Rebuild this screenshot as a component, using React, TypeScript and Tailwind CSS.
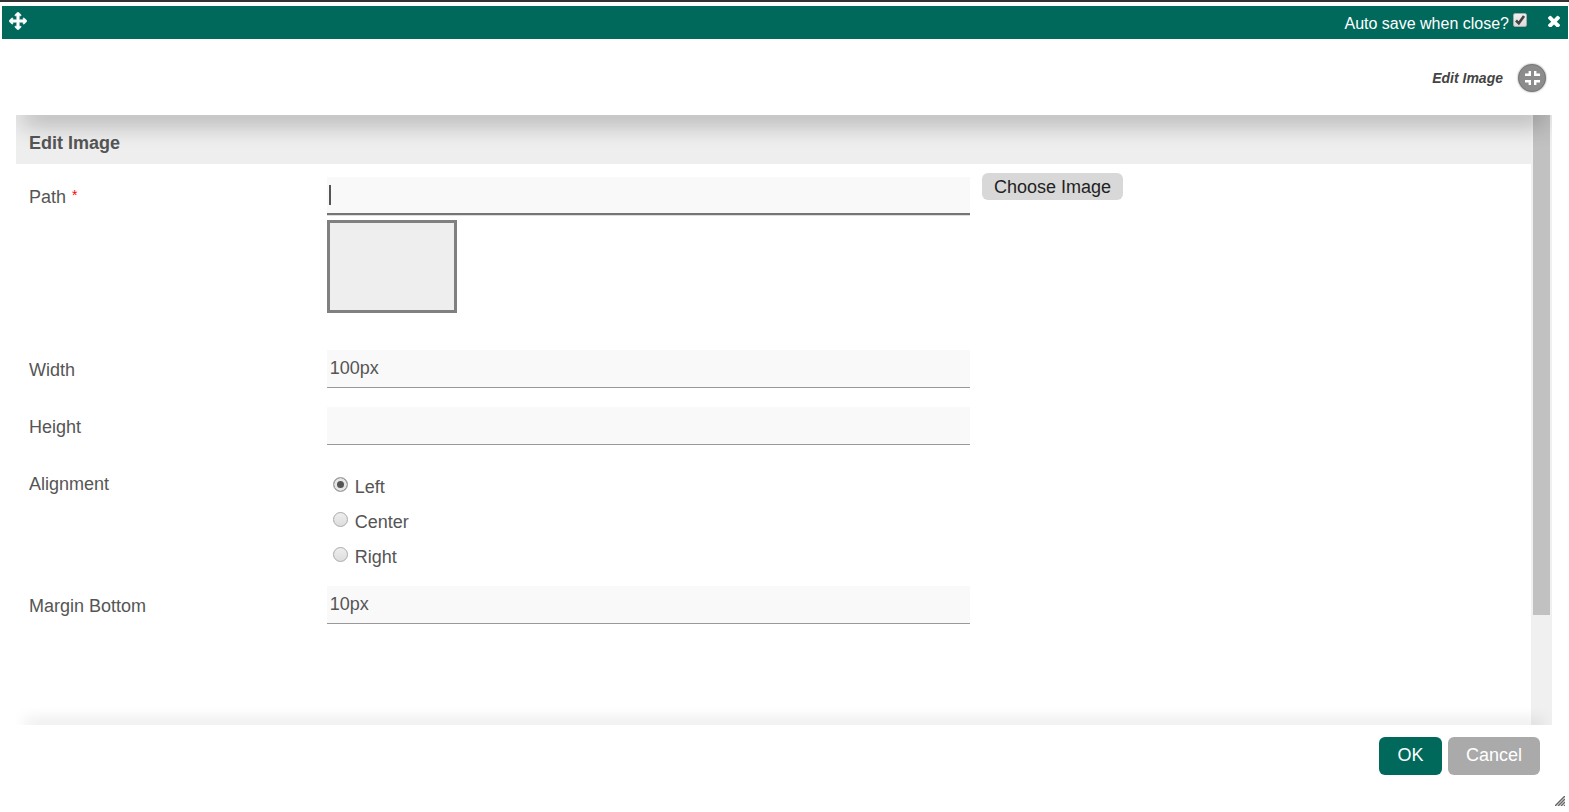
import React, { useState } from 'react';

const ALIGNMENTS = ['Left', 'Center', 'Right'];

const inputClass =
  'block w-full h-[38px] px-[3px] pb-px bg-[#f9f9f9] border-b border-[#999] rounded-none outline-none text-[#555]';

function ArrowsIcon() {
  return (
    <svg viewBox="0 0 1792 1792" className="w-[18px] h-[18px]" fill="currentColor" stroke="currentColor" strokeWidth="50" aria-hidden="true">
      <path d="M1792 896q0 26-19 45l-256 256q-19 19-45 19t-45-19-19-45v-128h-384v384h128q26 0 45 19t19 45-19 45l-256 256q-19 19-45 19t-45-19l-256-256q-19-19-19-45t19-45 45-19h128v-384h-384v128q0 26-19 45t-45 19-45-19l-256-256q-19-19-19-45t19-45l256-256q19-19 45-19t45 19 19 45v128h384v-384h-128q-26 0-45-19t-19-45 19-45l256-256q19-19 45-19t45 19l256 256q19 19 19 45t-19 45-45 19h-128v384h384v-128q0-26 19-45t45-19 45 19l256 256q19 19 19 45z" />
    </svg>
  );
}

function CloseIcon() {
  return (
    <svg viewBox="302 302 1188 1188" className="w-3 h-3" fill="currentColor" aria-hidden="true">
      <path d="M1490 1322q0 40-28 68l-136 136q-28 28-68 28t-68-28l-294-294-294 294q-28 28-68 28t-68-28l-136-136q-28-28-28-68t28-68l294-294-294-294q-28-28-28-68t28-68l136-136q28-28 68-28t68 28l294 294 294-294q28-28 68-28t68 28l136 136q28 28 28 68t-28 68l-294 294 294 294q28 28 28 68z" />
    </svg>
  );
}

function CompressIcon() {
  return (
    <svg viewBox="0 0 15 14" className="w-[15px] h-3.5" fill="none" stroke="currentColor" strokeWidth="2.4" aria-hidden="true">
      <path d="M0 3.8h4.8V0M15 3.8h-4.8V0M0 10.2h4.8V14M15 10.2h-4.8V14" />
    </svg>
  );
}

function Row({ label, htmlFor, required, children }: {
  label: string;
  htmlFor?: string;
  required?: boolean;
  children: React.ReactNode;
}) {
  return (
    <div className="flex items-start pt-2.5 pb-[9px]">
      <label htmlFor={htmlFor} className="w-1/5 pt-2 leading-6">
        {label}
        {required && <span className="ml-1.5 align-top text-sm leading-5 text-[#f00]">*</span>}
      </label>
      {children}
    </div>
  );
}

export default function App() {
  const [path, setPath] = useState('');
  const [width, setWidth] = useState('100px');
  const [height, setHeight] = useState('');
  const [marginBottom, setMarginBottom] = useState('10px');
  const [alignment, setAlignment] = useState('Left');
  const [autoSave, setAutoSave] = useState(true);

  return (
    <div className="flex flex-col min-h-screen bg-white border-t-2 border-[#333] font-['Liberation_Sans',Arial,sans-serif] text-lg text-[#555]">
      {/* Title bar */}
      <div className="flex items-center justify-between h-[33px] mt-1 ml-0.5 mr-px pl-[7px] pr-2 bg-[#00695c] text-white">
        <button type="button" aria-label="Move" className="pb-1">
          <ArrowsIcon />
        </button>
        <div className="flex items-center">
          <label htmlFor="auto-save" className="pt-0.5 text-base">Auto save when close?</label>
          <span className="relative ml-1 mb-1.5 flex">
            <input
              id="auto-save"
              type="checkbox"
              checked={autoSave}
              onChange={(e) => setAutoSave(e.target.checked)}
              className="appearance-none w-3.5 h-3.5 rounded-xs border border-[#aaa] bg-linear-to-b from-[#eee] to-[#ddd]"
            />
            {autoSave && (
              <svg viewBox="0 0 14 14" className="absolute inset-0 w-3.5 h-3.5 pointer-events-none" fill="none" stroke="#444" strokeWidth="2.6" aria-hidden="true">
                <path d="M3 7.5l2.8 2.8L11 3" />
              </svg>
            )}
          </span>
          <button type="button" aria-label="Close" className="ml-[21px] pb-1">
            <CloseIcon />
          </button>
        </div>
      </div>

      {/* Dialog header */}
      <div className="flex items-center justify-end h-[76px] pt-0.5 pr-[23px]">
        <span className="text-sm font-bold italic text-[#444]">Edit Image</span>
        <button
          type="button"
          aria-label="Exit full screen"
          className="flex items-center justify-center ml-[15px] w-7 h-7 rounded-full bg-[#8c8c8c] border border-[#777] text-white shadow-[0_0_2px_#888]"
        >
          <CompressIcon />
        </button>
      </div>

      {/* Scrollable form */}
      <div className="relative flex grow ml-4 mr-[17px] overflow-hidden">
        <div className="grow">
          <h2 className="h-[49px] px-[13px] pt-3.5 mb-[3px] leading-7 font-bold bg-[#eee]">Edit Image</h2>
          <form className="px-[13px]">
            <Row label="Path" htmlFor="path" required>
              <div className="w-[44%] pr-3 pb-[18px]">
                <div className="relative">
                  <input
                    id="path"
                    type="text"
                    value={path}
                    onChange={(e) => setPath(e.target.value)}
                    className="block w-full h-[38px] px-[3px] bg-[#f9f9f9] border-b-2 border-[#757575] rounded-none outline-none caret-transparent shadow-[0_1px_0_#ddd]"
                  />
                  <span className="absolute left-0.5 top-2 w-0.5 h-5 bg-[#555]" />
                </div>
                <div className="mt-[5px] w-[130px] h-[93px] border-3 border-[#808080] bg-[#eee]" />
              </div>
              <button type="button" className="-mt-1 h-[27px] px-3 rounded-md bg-[#d8d8d8] leading-7 text-[#222]">
                Choose Image
              </button>
            </Row>

            <Row label="Width" htmlFor="width">
              <div className="w-[44%] pr-3">
                <input id="width" type="text" value={width} onChange={(e) => setWidth(e.target.value)} className={inputClass} />
              </div>
            </Row>

            <Row label="Height" htmlFor="height">
              <div className="w-[44%] pr-3">
                <input id="height" type="text" value={height} onChange={(e) => setHeight(e.target.value)} className={inputClass} />
              </div>
            </Row>

            <Row label="Alignment">
              <div role="radiogroup" aria-label="Alignment" className="w-[44%] pl-1.5 pt-[5px] -mb-[7px]">
                {ALIGNMENTS.map((name) => (
                  <label key={name} className="flex items-center h-[35px]">
                    <input
                      type="radio"
                      name="alignment"
                      value={name}
                      checked={alignment === name}
                      onChange={() => setAlignment(name)}
                      className="appearance-none w-[15px] h-[15px] mb-1 mr-[7px] rounded-full border border-[#aaa] bg-linear-to-b from-[#eee] to-[#ddd] checked:bg-none checked:bg-[#555] checked:shadow-[inset_0_0_0_3px_#e6e6e6]"
                    />
                    {name}
                  </label>
                ))}
              </div>
            </Row>

            <Row label="Margin Bottom" htmlFor="margin-bottom">
              <div className="w-[44%] pr-3">
                <input id="margin-bottom" type="text" value={marginBottom} onChange={(e) => setMarginBottom(e.target.value)} className={inputClass} />
              </div>
            </Row>
          </form>
        </div>

        {/* Scrollbar */}
        <div className="w-[21px] px-0.5 bg-[#f0f0f0]">
          <div className="h-[82%] bg-[#c1c1c1]" />
        </div>

        {/* Shadows cast by the header and footer */}
        <div className="absolute left-3 right-3 top-0 h-0 shadow-[0_0_24px_6px_rgba(0,0,0,0.42)]" />
        <div className="absolute left-3 right-3 bottom-0 h-0 shadow-[0_0_16px_3px_rgba(0,0,0,0.18)]" />
      </div>

      {/* Footer */}
      <div className="relative flex justify-end gap-1.5 h-[87px] pt-3 pr-[29px]">
        <button type="button" className="w-[63px] h-[38px] pb-0.5 rounded-md bg-[#00695c] text-white">OK</button>
        <button type="button" className="w-[92px] h-[38px] pb-0.5 rounded-md bg-[#aaa] text-white">Cancel</button>
        <svg viewBox="0 0 10 10" className="absolute right-1 bottom-1.5 w-2.5 h-2.5" stroke="#666" strokeWidth="1.5" aria-hidden="true">
          <path d="M0 10L10 0M3 10l7-7M6 10l4-4M9 10l1-1" />
        </svg>
      </div>
    </div>
  );
}
